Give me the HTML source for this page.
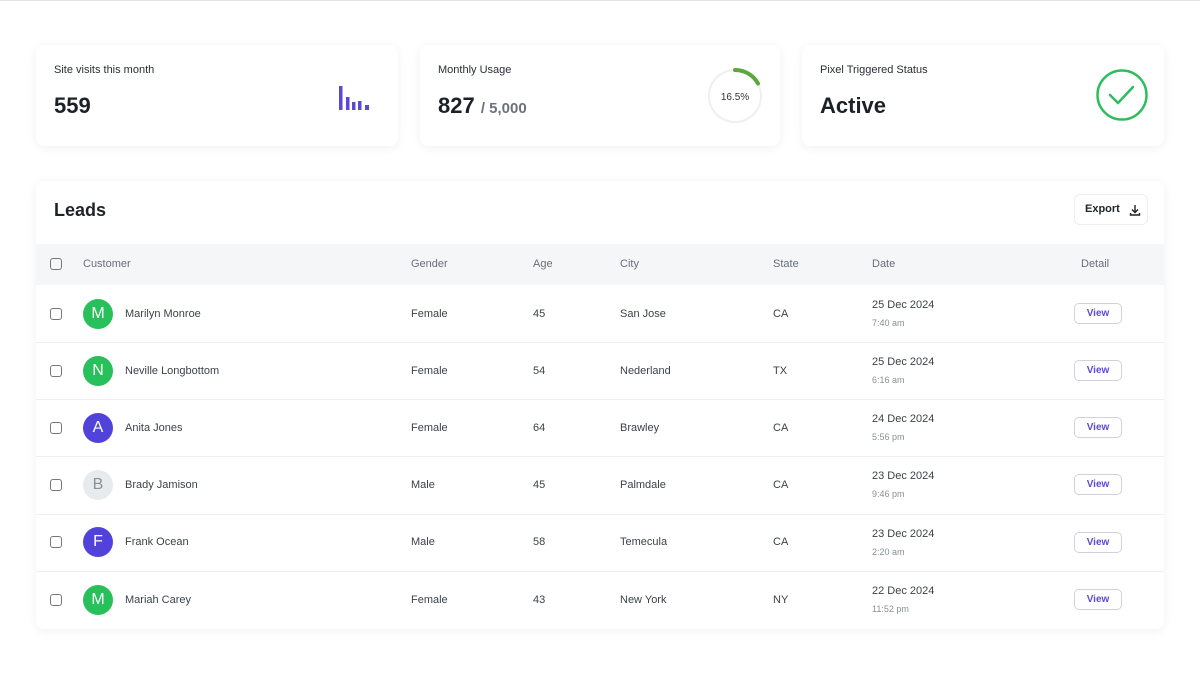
<!DOCTYPE html>
<html><head><meta charset="utf-8"><style>
*{box-sizing:border-box;margin:0;padding:0}
body{width:1200px;height:675px;background:#fff;font-family:"Liberation Sans",sans-serif;color:#1f2328;position:relative;overflow:hidden;border-top:1px solid #e3e3e3}
.card{position:absolute;background:#fff;border-radius:8px;box-shadow:0 2px 10px rgba(0,0,0,0.06)}
.lbl{position:absolute;left:18px;top:19px;font-size:11px;color:#2a2e33}
.big{position:absolute;left:18px;top:48px;font-size:22px;font-weight:bold;color:#1d2126}
.t{position:absolute;font-size:11px;color:#3d4249}
.h{position:absolute;font-size:11px;color:#6a6f76}
.cb{position:absolute;left:50px;width:12px;height:12px;border:1.3px solid #777;border-radius:3px}
.av{position:absolute;left:83px;width:30px;height:30px;border-radius:50%;color:#fff;font-size:16px;text-align:center;line-height:30px}
.vb{position:absolute;left:1074px;width:48px;height:21px;border:1px solid #cfd3d8;border-radius:5px;font-size:10px;font-weight:bold;color:#5b4bd3;text-align:center;line-height:19px}
.line{position:absolute;left:36px;width:1128px;height:1px;background:#eceef0}
</style></head><body>
<div class="card" style="left:36px;top:44px;width:362px;height:101px">
<div class="lbl">Site visits this month</div><div class="big">559</div>
<svg style="position:absolute;left:302px;top:40px" width="34" height="26"><g fill="#5a48d6"><rect x="1" y="1" width="3.5" height="24"/><rect x="8" y="12" width="3.5" height="13"/><rect x="14" y="17" width="3.5" height="8"/><rect x="20" y="16" width="3.5" height="9"/><rect x="27" y="20" width="4" height="5"/></g></svg>
</div>
<div class="card" style="left:420px;top:44px;width:360px;height:101px">
<div class="lbl">Monthly Usage</div><div class="big">827 <span style="font-size:15px;color:#6c7178">/ 5,000</span></div>
<svg style="position:absolute;left:286px;top:22px" width="58" height="58"><circle cx="29" cy="29" r="26" fill="none" stroke="#efefef" stroke-width="2"/><path d="M29 3 A26 26 0 0 1 52 16.5" fill="none" stroke="#5aa83c" stroke-width="4" stroke-linecap="round"/><text x="29" y="33" text-anchor="middle" font-size="10" fill="#333" font-family="Liberation Sans">16.5%</text></svg>
</div>
<div class="card" style="left:802px;top:44px;width:362px;height:101px">
<div class="lbl">Pixel Triggered Status</div><div class="big">Active</div>
<svg style="position:absolute;left:293px;top:24px" width="54" height="54"><circle cx="27" cy="26" r="24.5" fill="none" stroke="#2dbd5e" stroke-width="2.5"/><path d="M15 26 L23 34 L38 18" fill="none" stroke="#2dbd5e" stroke-width="2.5" stroke-linecap="round" stroke-linejoin="round"/></svg>
</div>
<div class="card" style="left:36px;top:180px;width:1128px;height:448px"></div>
<div style="position:absolute;left:54px;top:199px;font-size:18px;font-weight:bold;color:#1f2328">Leads</div>
<div style="position:absolute;left:1074px;top:193px;width:74px;height:31px;border:1px solid #eceef0;border-radius:6px;font-size:11px;font-weight:bold;line-height:29px;padding-left:10px">Export <svg style="position:absolute;left:54px;top:9px" width="12" height="12"><path d="M6 1V8M3 5.5L6 8.5L9 5.5M1.5 9V11H10.5V9" fill="none" stroke="#222" stroke-width="1.4"/></svg></div>
<div style="position:absolute;left:36px;top:243px;width:1128px;height:41px;background:#f4f6f8"></div>
<div class="cb" style="top:257px"></div>
<div class="h" style="left:83px;top:257px">Customer</div><div class="h" style="left:411px;top:257px">Gender</div><div class="h" style="left:533px;top:257px">Age</div><div class="h" style="left:620px;top:257px">City</div><div class="h" style="left:773px;top:257px">State</div><div class="h" style="left:872px;top:257px">Date</div><div class="h" style="left:1081px;top:257px">Detail</div>

<div class="cb" style="top:307px"></div><div class="av" style="top:298px;background:#27c05a">M</div><div class="t" style="left:125px;top:307px">Marilyn Monroe</div><div class="t" style="left:411px;top:307px">Female</div><div class="t" style="left:533px;top:307px">45</div><div class="t" style="left:620px;top:307px">San Jose</div><div class="t" style="left:773px;top:307px">CA</div><div class="t" style="left:872px;top:298px">25 Dec 2024</div><div class="t" style="left:872px;top:317px;font-size:9px;color:#8a8f95">7:40 am</div><div class="vb" style="top:302px">View</div>
<div class="line" style="top:341px"></div>
<div class="cb" style="top:364px"></div><div class="av" style="top:355px;background:#27c05a">N</div><div class="t" style="left:125px;top:364px">Neville Longbottom</div><div class="t" style="left:411px;top:364px">Female</div><div class="t" style="left:533px;top:364px">54</div><div class="t" style="left:620px;top:364px">Nederland</div><div class="t" style="left:773px;top:364px">TX</div><div class="t" style="left:872px;top:355px">25 Dec 2024</div><div class="t" style="left:872px;top:374px;font-size:9px;color:#8a8f95">6:16 am</div><div class="vb" style="top:359px">View</div>
<div class="line" style="top:398px"></div>
<div class="cb" style="top:421px"></div><div class="av" style="top:412px;background:#5143d9">A</div><div class="t" style="left:125px;top:421px">Anita Jones</div><div class="t" style="left:411px;top:421px">Female</div><div class="t" style="left:533px;top:421px">64</div><div class="t" style="left:620px;top:421px">Brawley</div><div class="t" style="left:773px;top:421px">CA</div><div class="t" style="left:872px;top:412px">24 Dec 2024</div><div class="t" style="left:872px;top:431px;font-size:9px;color:#8a8f95">5:56 pm</div><div class="vb" style="top:416px">View</div>
<div class="line" style="top:455px"></div>
<div class="cb" style="top:478px"></div><div class="av" style="top:469px;background:#e8ebee;color:#8a9097">B</div><div class="t" style="left:125px;top:478px">Brady Jamison</div><div class="t" style="left:411px;top:478px">Male</div><div class="t" style="left:533px;top:478px">45</div><div class="t" style="left:620px;top:478px">Palmdale</div><div class="t" style="left:773px;top:478px">CA</div><div class="t" style="left:872px;top:469px">23 Dec 2024</div><div class="t" style="left:872px;top:488px;font-size:9px;color:#8a8f95">9:46 pm</div><div class="vb" style="top:473px">View</div>
<div class="line" style="top:513px"></div>
<div class="cb" style="top:535px"></div><div class="av" style="top:526px;background:#5143d9">F</div><div class="t" style="left:125px;top:535px">Frank Ocean</div><div class="t" style="left:411px;top:535px">Male</div><div class="t" style="left:533px;top:535px">58</div><div class="t" style="left:620px;top:535px">Temecula</div><div class="t" style="left:773px;top:535px">CA</div><div class="t" style="left:872px;top:527px">23 Dec 2024</div><div class="t" style="left:872px;top:546px;font-size:9px;color:#8a8f95">2:20 am</div><div class="vb" style="top:531px">View</div>
<div class="line" style="top:570px"></div>
<div class="cb" style="top:593px"></div><div class="av" style="top:584px;background:#27c05a">M</div><div class="t" style="left:125px;top:593px">Mariah Carey</div><div class="t" style="left:411px;top:593px">Female</div><div class="t" style="left:533px;top:593px">43</div><div class="t" style="left:620px;top:593px">New York</div><div class="t" style="left:773px;top:593px">NY</div><div class="t" style="left:872px;top:584px">22 Dec 2024</div><div class="t" style="left:872px;top:603px;font-size:9px;color:#8a8f95">11:52 pm</div><div class="vb" style="top:588px">View</div>
</body></html>
